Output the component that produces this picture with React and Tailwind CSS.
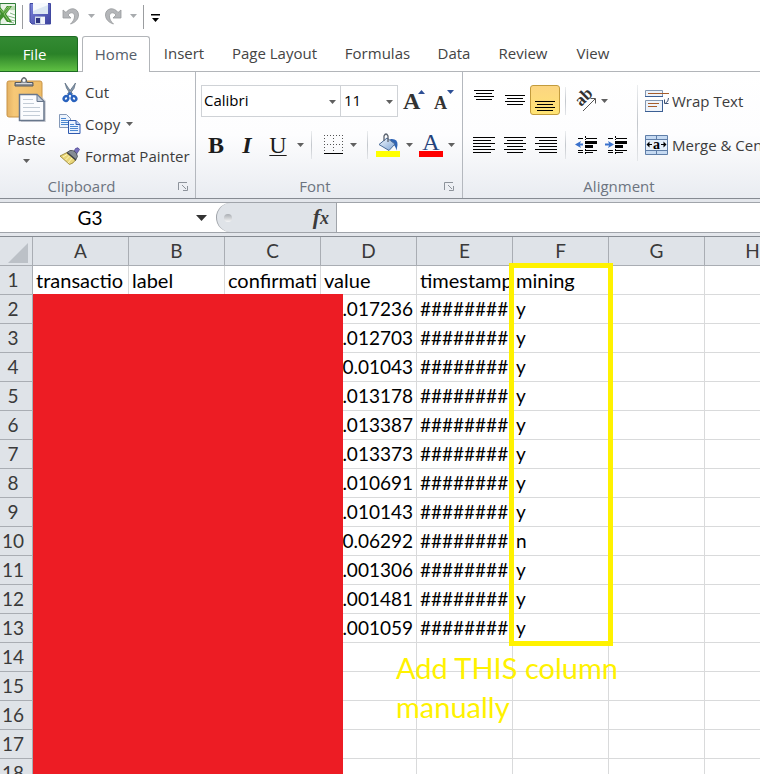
import React from "react";

const COLUMNS = ["A", "B", "C", "D", "E", "F", "G", "H"];
const HASHES = "########";
const VALUES = [
  [".017236", "y"],
  [".012703", "y"],
  ["0.01043", "y"],
  [".013178", "y"],
  [".013387", "y"],
  [".013373", "y"],
  [".010691", "y"],
  [".010143", "y"],
  ["0.06292", "n"],
  [".001306", "y"],
  [".001481", "y"],
  [".001059", "y"],
];
const ROWS = [
  ["transactio", "label", "confirmati", "value", "timestamp", "mining", "", ""],
  ...VALUES.map(([value, mined]) => ["", "", "", value, HASHES, mined, "", ""]),
  ...Array.from({ length: 5 }, () => Array(8).fill("")),
];

const TABS = [
  ["Insert", "w-[68px]"],
  ["Page Layout", "w-[113px]"],
  ["Formulas", "w-[93px]"],
  ["Data", "w-[60px]"],
  ["Review", "w-[78px]"],
  ["View", "w-[62px]"],
];

const VERTICAL_LINES = [[0, 20], [2, 16], [0, 20], [2, 16]];
const LEFT_LINES = [[0, 22], [0, 18], [0, 22], [0, 18], [0, 22], [0, 18]];
const CENTRE_LINES = [[0, 22], [3, 16], [0, 22], [3, 16], [0, 22], [3, 16]];
const RIGHT_LINES = [[0, 22], [4, 18], [0, 22], [4, 18], [0, 22], [4, 18]];

function Caret({ className = "text-[#606060]" }) {
  return (
    <svg width="7" height="4" viewBox="0 0 7 4" className={`shrink-0 ${className}`} aria-hidden="true">
      <path d="M0 0h7L3.5 4z" fill="currentColor" />
    </svg>
  );
}

function Divider({ className = "" }) {
  return <span className={`w-px shrink-0 bg-gradient-to-b from-[#eceef0] via-[#c3c7cc] to-[#e4e6e9] ${className}`} />;
}

function ExcelIcon() {
  return (
    <svg width="17" height="24" viewBox="0 0 17 24" aria-hidden="true">
      <path d="M0 1.5h15.5v21H0z" fill="#e9f3e6" stroke="#2f7d39" />
      <path d="M6 4h9v4H8z" fill="#b9dbb0" />
      <path d="M9 8l6 3v11H6z" fill="#fafdf9" />
      <path d="M8 14l7 2M7 17l8 2M9 20l5 1M10 11l5 2" stroke="#86b886" />
      <path d="M0 5l3.5 4L7 4h5L6 12l6 8H7l-3.500-5L0 19v-6l1-1-1-2z" fill="#41902e" />
      <path d="M0 7l3 3.500L8 5h2L4 12l5 7" fill="none" stroke="#8cc66c" />
    </svg>
  );
}

function SaveIcon() {
  return (
    <svg width="23" height="24" viewBox="0 0 23 24" aria-hidden="true">
      <defs>
        <linearGradient id="disk" x1="0" y1="0" x2="1" y2="1">
          <stop offset="0" stopColor="#7c86dc" />
          <stop offset="1" stopColor="#3b419e" />
        </linearGradient>
      </defs>
      <path d="M1 1.500h20.500v20.500H3l-2-2z" fill="url(#disk)" stroke="#4048a0" />
      <path d="M4 1h15v11H4z" fill="#f7fafd" />
      <path d="M4 9l15-6v9H4z" fill="#dbe7f2" />
      <path d="M6 14.500h10V22H6z" fill="#cfdaea" />
      <path d="M7 16h4v5H7z" fill="#2d3580" />
      <path d="M12 15h4v7h-4z" fill="#f2f5fa" />
    </svg>
  );
}

function UndoIcon({ flip }) {
  return (
    <svg width="18" height="19" viewBox="0 0 18 19" className={flip ? "-scale-x-100" : ""} aria-hidden="true">
      <path d="M1 3v8h8l-3-3c3-4 7-2 6.500 2-.3 3-2 5-4 7 5-1.500 8-5 8-9C16.500 1 8-.5 4 5.500z" fill="#b4b6b9" stroke="#97999c" strokeWidth=".8" />
    </svg>
  );
}

function PasteIcon() {
  return (
    <svg width="41" height="47" viewBox="0 0 41 47" aria-hidden="true">
      <defs>
        <linearGradient id="board" x1="0" y1="0" x2="1" y2="0">
          <stop offset="0" stopColor="#e3b163" />
          <stop offset=".2" stopColor="#f6c877" />
          <stop offset="1" stopColor="#eebc66" />
        </linearGradient>
      </defs>
      <rect x="1" y="5" width="35" height="36" rx="2" fill="url(#board)" stroke="#c99447" />
      <path d="M9 10V6.500h6l1-4q2-2 4 0l1 4h6V10z" fill="#8e9298" stroke="#575b61" />
      <path d="M10 7.500h16" stroke="#d8dadd" />
      <circle cx="18" cy="4.500" r="1.400" fill="#fff" />
      <path d="M15 20h20l5 5v21H15z" fill="#b9bdc4" opacity=".6" />
      <path d="M13.500 18.500H31l7 7V44.500H13.500z" fill="#fbfcfe" stroke="#67768b" strokeWidth="1.500" />
      <path d="M31 18.500v7h7z" fill="#c3cdda" stroke="#67768b" />
      <path d="M17 23.500h10M17 27.500h11M17 31.500h17M17 35.500h17M17 39.500h17" stroke="#c3ccd6" />
    </svg>
  );
}

function CutIcon() {
  return (
    <svg width="20" height="21" viewBox="0 0 20 21" aria-hidden="true">
      <path d="M5 1l1.500 5L11 13l1.500-1zM15.500 1L14 6.500 9 13l-1.500-1z" fill="#8597ab" stroke="#53657a" strokeWidth=".7" />
      <ellipse cx="6" cy="16.500" rx="2.200" ry="2.500" fill="none" stroke="#2962bd" strokeWidth="2.400" transform="rotate(35 6 16.500)" />
      <ellipse cx="14" cy="16.500" rx="2.200" ry="2.500" fill="none" stroke="#2962bd" strokeWidth="2.400" transform="rotate(-35 14 16.500)" />
      <path d="M7.500 14L10 11l2.500 3" fill="none" stroke="#2962bd" strokeWidth="1.800" />
    </svg>
  );
}

function CopyIcon() {
  return (
    <svg width="22" height="20" viewBox="0 0 22 20" aria-hidden="true">
      <path d="M.5.5h7l4 4v9H.5z" fill="#edf4fd" stroke="#8499b8" />
      <path d="M2 4.500h5M2 6.500h7M2 8.500h7M2 10.500h7" stroke="#4b87d0" />
      <path d="M9.500 6.500h7.500l4 4v9H9.500z" fill="#eaf2fe" stroke="#2f59ae" />
      <path d="M17 6.500v4h4" fill="#b8d0ef" stroke="#2f59ae" />
      <path d="M11 10.500h4M11 12.500h8M11 14.500h8M11 16.500h8" stroke="#4b87d0" />
    </svg>
  );
}

function BrushIcon() {
  return (
    <svg width="22" height="19" viewBox="0 0 22 19" aria-hidden="true">
      <path d="M14 6l2.500-4.500q3-2 4 1L17 8z" fill="#7770bd" stroke="#4a438d" strokeWidth=".7" />
      <path d="M11 3.500q6-1 7.500 6L16 14 8 5.500z" fill="#858b94" stroke="#41464e" strokeWidth=".8" />
      <path d="M8 5.500L1 9l9.500 8.500q4-1 6-4.500z" fill="#e9d67a" stroke="#8f7b2b" strokeWidth=".8" />
      <path d="M8 7.500l-4 2.500M10.500 9l-4 4M13 11l-4 5" stroke="#fff6b8" />
      <path d="M8 5.500l9 7.500" stroke="#3c4047" strokeWidth="1.400" />
    </svg>
  );
}

function Launcher({ label }) {
  return (
    <button type="button" aria-label={label} className="ml-3 flex h-4 w-4 items-center justify-center">
      <svg width="10" height="9" viewBox="0 0 10 9" aria-hidden="true">
        <path d="M.5 8V.5H9" fill="none" stroke="#8d939b" />
        <path d="M4 3l4 4M9.500 4v4.500H5" fill="none" stroke="#8d939b" />
      </svg>
    </button>
  );
}

function Lines({ width, lines }) {
  return (
    <svg width={width} height={lines.length * 3 - 2} shapeRendering="crispEdges" aria-hidden="true">
      {lines.map(([x, w], i) => (
        <rect key={i} x={x} y={i * 3} width={w} height="1" fill="#000" />
      ))}
    </svg>
  );
}

function BordersIcon() {
  return (
    <svg width="20" height="20" viewBox="0 0 20 20" shapeRendering="crispEdges" aria-hidden="true">
      <path d="M0 .5h19M0 9.500h19M.5 0v18M9.500 0v18M18.500 0v18" stroke="#555" strokeDasharray="1 2" />
      <path d="M0 18.500h19" stroke="#000" />
    </svg>
  );
}

function FillIcon() {
  return (
    <svg width="24" height="24" viewBox="0 0 24 24" aria-hidden="true">
      <defs>
        <linearGradient id="bucket" x1="0" y1="0" x2="1" y2="1">
          <stop offset="0" stopColor="#f6fafe" />
          <stop offset="1" stopColor="#7ba2d4" />
        </linearGradient>
      </defs>
      <path d="M14 6q8-1 7.500 6l-1 5.500q-1-5-5-8z" fill="#2f64b5" />
      <path d="M3 11.500l8-6.500 8 6-6 6.500z" fill="url(#bucket)" stroke="#4b6c99" />
      <path d="M8 8V3q2-4 4 0v6" fill="none" stroke="#59616d" strokeWidth="1.300" />
      <rect y="18" width="24" height="6" fill="#ff0" />
    </svg>
  );
}

function OrientationIcon() {
  return (
    <svg width="24" height="24" viewBox="0 0 24 24" aria-hidden="true">
      <text x="0" y="0" transform="translate(7 18) rotate(-45)" fontFamily="Liberation Serif, serif" fontSize="17" fontWeight="700" fill="#333">ab</text>
      <path d="M9 22L21 10M16.500 9.500h5v5" fill="none" stroke="#555" />
    </svg>
  );
}

function IndentIcon({ increase }) {
  return (
    <svg width="23" height="19" viewBox="0 0 23 19" aria-hidden="true">
      <g shapeRendering="crispEdges">
        <path d="M3 2.500h5M11 2.500h11M3 14.500h5M11 14.500h11M3 16.500h5M11 16.500h7" stroke="#000" />
        <path d="M10 5h12v3H10zM10 9h8v3h-8z" fill="#000" />
        <path d="M10.500 0v4M10.500 13v6" stroke="#000" strokeDasharray="2 1" />
      </g>
      {increase ? (
        <path d="M0 7.500h4L3 5l6 3.500L3 12l1-2.500H0z" fill="#3971cc" />
      ) : (
        <path d="M8 7.500H5L6 5 0 8.500 6 12 5 9.500h3z" fill="#3971cc" />
      )}
    </svg>
  );
}

function WrapIcon() {
  return (
    <svg width="25" height="23" viewBox="0 0 25 23" aria-hidden="true">
      <path d="M.5.500h17v6H.5zM.5 10.500h17v11H.5z" fill="#eef3fa" stroke="#8397b1" />
      <path d="M0 6.500h18M0 21.500h18M17.500 10v12" stroke="#3c5f94" />
      <path d="M3 3.500h21M3 13.500h11M3 16.500h9" stroke="#a55c2b" />
      <path d="M23.500 8q0 4-3 5M19.500 9.500v4h4" fill="none" stroke="#3c5073" />
    </svg>
  );
}

function MergeIcon() {
  return (
    <svg width="23" height="20" viewBox="0 0 23 20" aria-hidden="true">
      <path d="M.5.500h22v19H.5z" fill="#c6daf2" stroke="#5f7ea8" />
      <path d="M11.500 0v20M0 4.500h23M0 15.500h23" stroke="#5f7ea8" />
      <rect x="1" y="5" width="21" height="10" fill="#e6effa" />
      <path d="M2 9.500h5M16 9.500h5" stroke="#000" />
      <path d="M1.500 9.500l3-3v6zM21.500 9.500l-3-3v6z" fill="#000" />
      <text x="11.500" y="14" textAnchor="middle" fontFamily="Liberation Serif, serif" fontSize="14" fontWeight="700" fill="#000">a</text>
    </svg>
  );
}

function ResizeA({ up }) {
  return (
    <button type="button" aria-label={up ? "Increase font size" : "Decrease font size"} className={`flex h-8 ${up ? "w-8" : "w-7"} items-center justify-center`}>
      <svg width="24" height="28" viewBox="0 0 24 28" aria-hidden="true">
        <text x={up ? 1 : 2} y="22" fontFamily="Liberation Serif, serif" fontSize={up ? 24 : 18} fontWeight="700" fill="#333">A</text>
        {up ? <path d="M16 7h7l-3.500-4z" fill="#2d4f96" /> : <path d="M15 3h7l-3.500 4z" fill="#2d4f96" />}
      </svg>
    </button>
  );
}

function GroupTitle({ children, launcher }) {
  return (
    <div className="flex h-6 items-center">
      <span className="flex-1 text-center text-[#6c7480]">{children}</span>
      {launcher && <Launcher label={launcher} />}
    </div>
  );
}

function Ribbon() {
  const group = "flex shrink-0 flex-col justify-between border-r border-[#b4b8be] bg-gradient-to-b from-white via-[#fdfdfe] to-[#e9ecf1]";
  const tool = "flex h-8 items-center justify-center";
  return (
    <div className="flex h-[127px] shrink-0 overflow-hidden border-b border-[#868b92] text-[15px] text-[#3c3c3c]">
      <section className={`${group} w-[196px]`}>
        <div className="flex pt-1">
          <button type="button" className="flex w-[53px] flex-col items-center">
            <PasteIcon />
            <span className="mt-1 leading-6">Paste</span>
            <Caret className="mt-2 text-[#606060]" />
          </button>
          <div className="flex flex-col items-start pl-[6px]">
            <button type="button" className="flex h-8 items-center gap-1"><span className="flex w-[22px] justify-center"><CutIcon /></span>Cut</button>
            <button type="button" className="flex h-8 items-center gap-1"><CopyIcon />Copy<Caret className="ml-[2px] text-[#606060]" /></button>
            <button type="button" className="flex h-8 items-center gap-1 whitespace-nowrap"><BrushIcon />Format Painter</button>
          </div>
        </div>
        <div className="pr-1"><GroupTitle launcher="Clipboard options">Clipboard</GroupTitle></div>
      </section>

      <section className={`${group} w-[267px]`}>
        <div className="pt-[13px] pl-[5px]">
          <div className="flex h-8 text-black">
            <div className="relative w-[140px]">
              <select aria-label="Font" className="h-full w-full appearance-none border border-[#cfd2d6] bg-white px-[2px] pb-[2px]"><option>Calibri</option></select>
              <Caret className="pointer-events-none absolute top-[15px] right-[5px] text-[#606060]" />
            </div>
            <div className="relative w-[57px]">
              <select aria-label="Font size" className="h-full w-full appearance-none border border-l-0 border-[#cfd2d6] bg-white px-[3px] pb-[2px]"><option>11</option></select>
              <Caret className="pointer-events-none absolute top-[15px] right-[5px] text-[#606060]" />
            </div>
            <ResizeA up />
            <ResizeA />
          </div>
          <div className="mt-3 flex h-8 items-center font-['Liberation_Serif',serif] text-2xl text-[#1c1c1c]">
            <button type="button" aria-label="Bold" className={`${tool} w-[30px] font-bold`}>B</button>
            <button type="button" aria-label="Italic" className={`${tool} w-8 font-bold italic`}>I</button>
            <button type="button" aria-label="Underline" className={`${tool} w-[30px] underline decoration-1 underline-offset-2`}>U</button>
            <button type="button" aria-label="Underline styles" className={`${tool} w-[14px]`}><Caret /></button>
            <Divider className="ml-1 h-7" />
            <button type="button" aria-label="Bottom border" className={`${tool} ml-3 w-5`}><BordersIcon /></button>
            <button type="button" aria-label="Border styles" className={`${tool} w-[19px]`}><Caret /></button>
            <Divider className="ml-1 h-7" />
            <button type="button" aria-label="Fill colour" className={`${tool} ml-2 w-6`}><FillIcon /></button>
            <button type="button" aria-label="Fill colours" className={`${tool} w-[19px]`}><Caret /></button>
            <button type="button" aria-label="Font colour" className="flex w-6 flex-col items-center border-b-[6px] border-[#f00] leading-[18px] text-[#24427a]">A</button>
            <button type="button" aria-label="Font colours" className={`${tool} w-4`}><Caret /></button>
          </div>
        </div>
        <div className="pr-[5px] pl-[5px]"><GroupTitle launcher="Font options">Font</GroupTitle></div>
      </section>

      <section className={`${group} w-[313px]`}>
        <div className="flex pt-[13px] pl-[5px]">
          <div className="flex flex-col gap-3">
            <div className="flex h-8">
              <button type="button" aria-label="Top align" className="flex h-[30px] w-[31px] items-start justify-center pt-[5px]"><Lines width={20} lines={VERTICAL_LINES} /></button>
              <button type="button" aria-label="Middle align" className="flex h-[30px] w-[31px] items-center justify-center"><Lines width={20} lines={VERTICAL_LINES} /></button>
              <button type="button" aria-label="Bottom align" aria-pressed="true" className="flex h-[30px] w-[30px] items-end justify-center rounded-[3px] border border-[#c29b3d] bg-gradient-to-b from-[#fcd581] to-[#ffe474] pb-[3px]"><Lines width={20} lines={VERTICAL_LINES} /></button>
            </div>
            <div className="flex h-8">
              <button type="button" aria-label="Align left" className={`${tool} w-[31px]`}><Lines width={22} lines={LEFT_LINES} /></button>
              <button type="button" aria-label="Centre" className={`${tool} w-[31px]`}><Lines width={22} lines={CENTRE_LINES} /></button>
              <button type="button" aria-label="Align right" className={`${tool} w-[31px]`}><Lines width={22} lines={RIGHT_LINES} /></button>
            </div>
          </div>
          <div className="ml-1 flex flex-col gap-3">
            <div className="flex h-8 items-center">
              <Divider className="h-7" />
              <button type="button" aria-label="Orientation" className={`${tool} ml-2 gap-[3px]`}><OrientationIcon /><Caret /></button>
            </div>
            <div className="flex h-8 items-center">
              <Divider className="h-7" />
              <button type="button" aria-label="Decrease indent" className={`${tool} ml-[9px] w-[23px]`}><IndentIcon /></button>
              <button type="button" aria-label="Increase indent" className={`${tool} ml-[7px] w-[23px]`}><IndentIcon increase /></button>
            </div>
          </div>
          <Divider className="ml-[9px] h-[76px]" />
          <div className="ml-[7px] flex flex-col gap-3 whitespace-nowrap">
            <button type="button" className="flex h-8 items-center gap-[2px]"><WrapIcon />Wrap Text</button>
            <button type="button" className="flex h-8 items-center gap-1"><MergeIcon />Merge &amp; Center</button>
          </div>
        </div>
        <GroupTitle>Alignment</GroupTitle>
      </section>
    </div>
  );
}

function Sheet() {
  return (
    <div className="relative flex-1 overflow-hidden border-t border-[#868b92] bg-white">
      <table className="w-[801px] table-fixed border-separate border-spacing-0 font-[Lato,'Noto_Sans',sans-serif] text-[19px] leading-7 text-black">
        <colgroup>
          <col className="w-[33px]" />
          {COLUMNS.map((c) => <col key={c} className="w-24" />)}
        </colgroup>
        <thead>
          <tr className="h-[29px] bg-[#dfe3e8] text-[#3a3a3a]">
            <th aria-label="Select all" className="border-r border-b border-[#a9adb3] p-0">
              <svg width="20" height="20" className="mt-1 ml-2" aria-hidden="true"><path d="M20 0v20H0z" fill="#bcc1c7" /></svg>
            </th>
            {COLUMNS.map((c) => (
              <th key={c} scope="col" className="border-r border-b border-[#a9adb3] p-0 font-normal">{c}</th>
            ))}
          </tr>
        </thead>
        <tbody>
          {ROWS.map((row, r) => (
            <tr key={r} className={`h-[29px] ${r === 0 ? "text-[20px]" : ""}`}>
              <th scope="row" className="border-r border-b border-[#a9adb3] bg-[#dfe3e8] p-0 pr-[6px] text-[19px] font-normal text-[#3a3a3a]">{r + 1}</th>
              {row.map((cell, c) => (
                <td key={c} className={`overflow-hidden border-r border-b border-[#d9dadb] py-0 whitespace-nowrap ${c === 3 && r > 0 ? "pr-[3px] text-right" : "pl-[3px]"}`}>{cell}</td>
              ))}
            </tr>
          ))}
        </tbody>
      </table>
      <div className="absolute top-[57px] bottom-0 left-[33px] w-[310px] bg-[#ed1c24]" />
      <div className="absolute top-[26px] left-[509px] h-[383px] w-[104px] border-[5px] border-[#fff200]" />
      <p className="absolute top-[411px] left-[396px] w-60 font-[Lato,'Noto_Sans',sans-serif] text-[29px] leading-[39px] text-[#fff200]">Add THIS column manually</p>
    </div>
  );
}

export default function App() {
  return (
    <div className="flex h-screen flex-col overflow-hidden bg-white font-['Open_Sans','Noto_Sans',sans-serif]">
      <header className="flex h-9 shrink-0 items-start pt-[2px]">
        <ExcelIcon />
        <span className="mt-[3px] ml-[5px] h-6 w-px bg-[#9b9da0]" />
        <button type="button" aria-label="Save" className="ml-[6px]"><SaveIcon /></button>
        <div className="flex h-7 items-center">
          <button type="button" aria-label="Undo" className="ml-[10px] flex items-center gap-2"><UndoIcon /><Caret className="text-[#a8abae]" /></button>
          <button type="button" aria-label="Redo" className="ml-[9px] flex items-center gap-2"><UndoIcon flip /><Caret className="text-[#a8abae]" /></button>
        </div>
        <span className="mt-[3px] ml-[6px] h-6 w-px bg-[#9b9da0]" />
        <button type="button" aria-label="Customize toolbar" className="mt-3 ml-[7px]">
          <svg width="9" height="9" viewBox="0 0 9 9" aria-hidden="true"><path d="M0 0h9v1.500H0zM1 4h7L4.500 8z" fill="#000" /></svg>
        </button>
      </header>

      <nav className="flex h-9 shrink-0 items-stretch text-[15px] text-[#444]">
        <button type="button" className="w-[78px] rounded-tr-[3px] border border-l-0 border-[#1d6b23] bg-gradient-to-b from-[#338a33] via-[#2a8228] to-[#5fc043] pr-2 text-white">File</button>
        <span className="w-1 border-b border-[#b2b5b9]" />
        <button type="button" className="w-[68px] rounded-t-[3px] border border-b-0 border-[#b2b5b9] text-[#555e6b]">Home</button>
        {TABS.map(([name, width]) => (
          <button key={name} type="button" className={`${width} shrink-0 border-b border-[#b2b5b9] whitespace-nowrap`}>{name}</button>
        ))}
        <span className="flex-1 border-b border-[#b2b5b9]" />
      </nav>

      <Ribbon />

      <div className="shrink-0 bg-[#e3e6eb] py-[3px]">
        <div className="flex h-[31px] border-y border-[#a0a4aa] bg-white">
          <div className="flex w-[216px] items-center">
            <input aria-label="Name box" defaultValue="G3" className="h-full w-[180px] bg-transparent text-center font-[Lato,'Noto_Sans',sans-serif] text-[19px] text-black outline-none" />
            <button type="button" aria-label="Named cells" className="flex h-full w-[36px] items-center justify-center pl-[6px]">
              <svg width="11" height="6" viewBox="0 0 11 6" aria-hidden="true"><path d="M0 0h11L5.500 6z" fill="#333" /></svg>
            </button>
          </div>
          <div className="flex w-[121px] items-center justify-between rounded-l-full border-r border-l border-[#a0a4aa] bg-[#dfe3e8] pr-[7px] pl-[7px]">
            <span className="h-2 w-2 rounded-full bg-gradient-to-b from-[#a9adb2] to-[#f6f7f8]" />
            <button type="button" aria-label="Insert function" className="font-['Liberation_Serif',serif] text-[22px] leading-6 font-bold text-[#3c3c3c] italic">f<span className="text-[18px]">x</span></button>
          </div>
          <input aria-label="Formula" className="min-w-0 flex-1 bg-white px-2 outline-none" />
        </div>
      </div>

      <Sheet />
    </div>
  );
}
